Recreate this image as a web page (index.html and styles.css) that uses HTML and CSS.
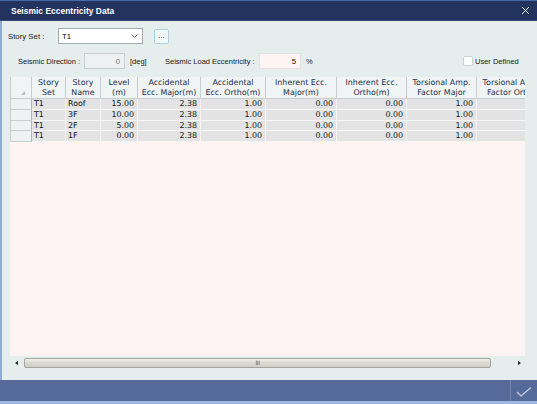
FILE: index.html
```html
<!DOCTYPE html>
<html>
<head>
<meta charset="utf-8">
<title>Seismic Eccentricity Data</title>
<link rel="stylesheet" href="styles.css">
</head>
<body>
<div class="window">
  <div class="titlebar">
    <span class="title">Seismic Eccentricity Data</span>
    <svg class="close" width="9" height="9" viewBox="0 0 9 9"><path d="M1 1 L8 8 M8 1 L1 8" stroke="#ffffff" stroke-width="1" fill="none"/></svg>
  </div>
  <div class="content">
    <div class="row1">
      <span class="lbl story-lbl">Story Set :</span>
      <div class="select"><span>T1</span>
        <svg class="chev" width="7" height="4" viewBox="0 0 7 4"><path d="M0.5 0.5 L3.5 3.3 L6.5 0.5" stroke="#555" stroke-width="1" fill="none"/></svg>
      </div>
      <div class="btn">...</div>
    </div>
    <div class="row2">
      <span class="lbl dir-lbl">Seismic Direction :</span>
      <div class="input disabled">0</div>
      <span class="lbl unit-deg">[deg]</span>
      <span class="lbl load-lbl">Seismic Load Eccentricity :</span>
      <div class="input pink">5</div>
      <span class="lbl unit-pct">%</span>
      <div class="check"><span class="box"></span><span class="lbl">User Defined</span></div>
    </div>
    <div class="grid">
      <div class="gtable">
        <div class="hc corner"><span class="tri"></span></div>
        <div class="hc">Story<br>Set</div>
        <div class="hc">Story<br>Name</div>
        <div class="hc">Level<br>(m)</div>
        <div class="hc">Accidental<br>Ecc. Major(m)</div>
        <div class="hc">Accidental<br>Ecc. Ortho(m)</div>
        <div class="hc">Inherent Ecc.<br>Major(m)</div>
        <div class="hc">Inherent Ecc.<br>Ortho(m)</div>
        <div class="hc">Torsional Amp.<br>Factor Major</div>
        <div class="hc">Torsional Amp.<br>Factor Ortho</div>

        <div class="rh"></div><div class="c l">T1</div><div class="c l">Roof</div><div class="c">15.00</div><div class="c">2.38</div><div class="c">1.00</div><div class="c">0.00</div><div class="c">0.00</div><div class="c">1.00</div><div class="c"></div>
        <div class="rh"></div><div class="c l">T1</div><div class="c l">3F</div><div class="c">10.00</div><div class="c">2.38</div><div class="c">1.00</div><div class="c">0.00</div><div class="c">0.00</div><div class="c">1.00</div><div class="c"></div>
        <div class="rh"></div><div class="c l">T1</div><div class="c l">2F</div><div class="c">5.00</div><div class="c">2.38</div><div class="c">1.00</div><div class="c">0.00</div><div class="c">0.00</div><div class="c">1.00</div><div class="c"></div>
        <div class="rh"></div><div class="c l">T1</div><div class="c l">1F</div><div class="c">0.00</div><div class="c">2.38</div><div class="c">1.00</div><div class="c">0.00</div><div class="c">0.00</div><div class="c">1.00</div><div class="c"></div>
      </div>
    </div>
    <div class="hscroll">
      <span class="arrow left"></span>
      <div class="thumb"><span class="grip">III</span></div>
      <span class="arrow right"></span>
    </div>
  </div>
  <div class="footer">
    <div class="ok">
      <svg width="16" height="10" viewBox="0 0 16 10"><path d="M1 5 L5 9 L15 0.5" stroke="#c9d1e4" stroke-width="1.1" fill="none"/></svg>
    </div>
  </div>
  <div class="strip"></div>
</div>
</body>
</html>
```

FILE: styles.css
```css
html, body {
  margin: 0;
  padding: 0;
  background: #e5eded;
}
.window {
  width: 537px;
  height: 404px;
  display: flex;
  flex-direction: column;
  overflow: hidden;
  font-family: "Liberation Sans", Arial, sans-serif;
}
.titlebar {
  height: 21px;
  flex: none;
  box-sizing: border-box;
  background: #23335f;
  border-top: 1px solid #4a68a4;
  border-bottom: 1px solid #34497a;
  display: flex;
  align-items: center;
  justify-content: space-between;
  padding: 0 7px 0 11px;
}
.title {
  color: #ffffff;
  font-weight: bold;
  font-size: 8.4px;
  letter-spacing: 0.05px;
}
.close {
  display: block;
  margin-top: -1px;
}
.content {
  height: 359px;
  flex: none;
  box-sizing: border-box;
  border-left: 2px solid #8eabd6;
  background: #e5eded;
  display: flex;
  flex-direction: column;
}
.lbl {
  font-size: 7.5px;
  color: #1a1a1a;
  white-space: nowrap;
  flex: none;
}
.row1 {
  margin-top: 7px;
  height: 16px;
  display: flex;
  align-items: center;
  padding-left: 6px;
}
.story-lbl {
  width: 50px;
  font-size: 7.8px;
}
.select {
  width: 85px;
  height: 16px;
  box-sizing: border-box;
  background: #ffffff;
  border: 1px solid #a3abab;
  display: flex;
  align-items: center;
  justify-content: space-between;
  padding: 0 4px 0 3px;
  font-size: 7.8px;
  color: #111;
}
.btn {
  margin-left: 11px;
  width: 15px;
  height: 15px;
  box-sizing: border-box;
  background: #f3f8f8;
  border: 1px solid #a9d2de;
  border-radius: 2px;
  font-size: 8px;
  color: #222;
  display: flex;
  align-items: center;
  justify-content: center;
  line-height: 1;
}
.row2 {
  margin-top: 9px;
  height: 16px;
  display: flex;
  align-items: center;
  padding-left: 16px;
}
.dir-lbl {
  width: 66px;
}
.input {
  height: 16px;
  flex: none;
  box-sizing: border-box;
  border: 1px solid #c9cfcf;
  font-size: 7.8px;
  display: flex;
  align-items: center;
  justify-content: flex-end;
  padding-right: 4px;
}
.input.disabled {
  width: 41px;
  background: #eef1f1;
  color: #777;
}
.input.pink {
  width: 42px;
  background: #fff4f4;
  border-color: #e8e0e0;
  color: #111;
}
.unit-deg {
  margin-left: 5px;
  width: 35px;
}
.load-lbl {
  width: 94px;
}
.unit-pct {
  margin-left: 5px;
  width: 20px;
}
.check {
  margin-left: 137px;
  display: flex;
  align-items: center;
}
.box {
  width: 10px;
  height: 10px;
  box-sizing: border-box;
  background: #ffffff;
  border: 1px solid #c9d0d0;
  border-radius: 2px;
  margin-right: 2px;
}
.grid {
  margin-top: 8px;
  margin-left: 8px;
  width: 515px;
  height: 279px;
  background: #fdf3f3;
  overflow: hidden;
}
.gtable {
  display: grid;
  grid-template-columns: 22px 34px 35px 37px 63px 65px 71px 70px 70px 70px;
  grid-template-rows: 22px repeat(4, 10.75px);
  width: max-content;
  font-family: "DejaVu Sans", Verdana, sans-serif;
  font-size: 7.9px;
}
.hc {
  box-sizing: border-box;
  background: #f0f4f4;
  border-right: 1px solid #c6cece;
  border-bottom: 1px solid #c6cece;
  color: #22304f;
  text-align: center;
  line-height: 9.6px;
  padding-top: 1px;
  white-space: nowrap;
  overflow: hidden;
}
.corner {
  position: relative;
  border-left: 1px solid #c6cece;
}
.tri {
  position: absolute;
  right: 6px;
  bottom: 3px;
  width: 0;
  height: 0;
  border-left: 4px solid transparent;
  border-bottom: 4px solid #b8bebe;
}
.rh {
  box-sizing: border-box;
  background: #eef2f2;
  border-left: 1px solid #c6cece;
  border-right: 1px solid #aeb8b8;
  border-bottom: 1px solid #c6cece;
}
.c {
  box-sizing: border-box;
  background: #e3e3e3;
  border-right: 1px solid #f4f4f4;
  border-bottom: 1px solid #f6f6f6;
  color: #111;
  text-align: right;
  padding-right: 3px;
  line-height: 10px;
  white-space: nowrap;
  overflow: hidden;
}
.c.l {
  text-align: left;
  padding-left: 2px;
  padding-right: 0;
}
.hscroll {
  margin-top: 1px;
  margin-left: 8px;
  width: 515px;
  height: 11px;
  display: flex;
  align-items: center;
}
.arrow {
  width: 0;
  height: 0;
  border-top: 2.5px solid transparent;
  border-bottom: 2.5px solid transparent;
}
.arrow.left {
  margin-left: 5px;
  border-right: 3px solid #222;
}
.arrow.right {
  margin-left: 27px;
  border-left: 3px solid #222;
}
.thumb {
  margin-left: 6px;
  width: 467px;
  height: 10px;
  box-sizing: border-box;
  border: 1px solid #a4a49c;
  border-radius: 2px;
  background: linear-gradient(#f2f2ee, #dcdcd6 40%, #cfcfc8);
  display: flex;
  align-items: center;
  justify-content: center;
}
.grip {
  font-family: "DejaVu Sans", sans-serif;
  font-size: 6px;
  color: #666;
  letter-spacing: -0.5px;
  line-height: 1;
}
.footer {
  height: 21px;
  flex: none;
  background: #566a99;
  display: flex;
  justify-content: flex-end;
}
.ok {
  width: 26px;
  border-left: 1px solid #7384ac;
  display: flex;
  align-items: center;
  justify-content: center;
  padding-top: 2px;
}
.ok svg {
  display: block;
}
.strip {
  flex: 1;
  background: #9db9e2;
}
```
